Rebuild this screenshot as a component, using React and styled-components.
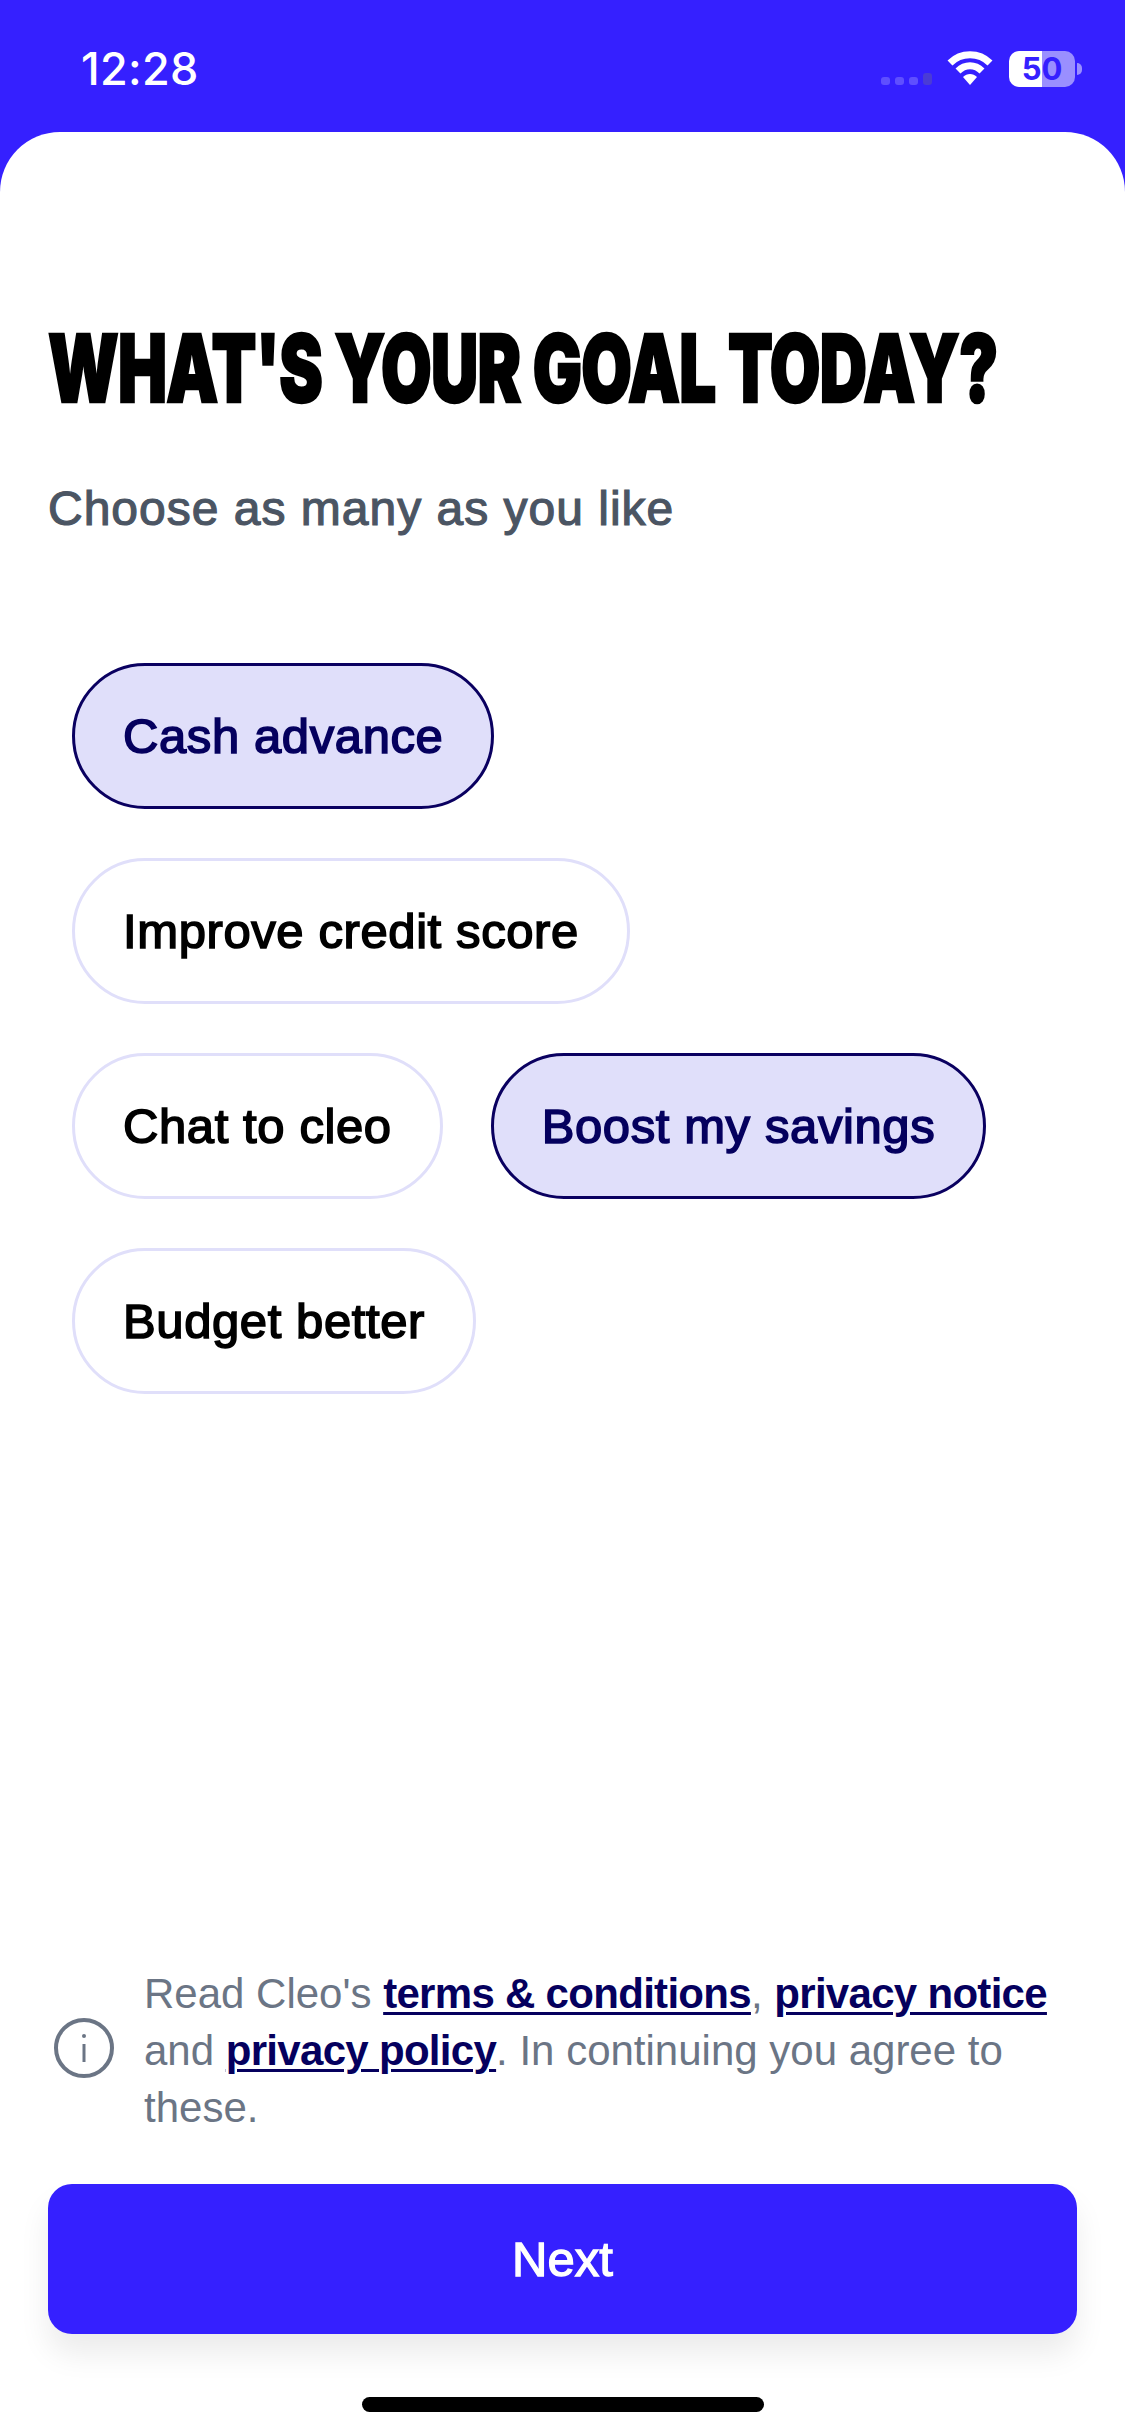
import React from 'react';
import styled, { createGlobalStyle } from 'styled-components';

const GlobalStyle = createGlobalStyle`
  html, body {
    margin: 0;
    padding: 0;
    background: #ffffff;
  }
  * {
    box-sizing: border-box;
  }
`;

const Screen = styled.div`
  width: 1125px;
  height: 2436px;
  display: flex;
  flex-direction: column;
  background: #3520ff;
  font-family: 'Liberation Sans', Arial, sans-serif;
  overflow: hidden;
`;

const StatusBar = styled.div`
  height: 132px;
  flex: none;
  display: flex;
  justify-content: space-between;
  align-items: flex-start;
  padding: 43px 43px 0 81px;
  color: #ffffff;
`;

const Time = styled.div`
  font-family: 'Inter', sans-serif;
  font-size: 45px;
  font-weight: 500;
  line-height: 52px;
  letter-spacing: 0.3px;
`;

const StatusIcons = styled.div`
  display: flex;
  align-items: flex-start;
  padding-top: 8px;
`;

const Cells = styled.div`
  display: flex;
  align-items: flex-end;
  gap: 5px;
  height: 34px;
  margin-right: 15px;
`;

const Cell = styled.span`
  width: 9px;
  height: ${(p) => (p.$dim ? 12 : 8)}px;
  border-radius: 3px;
  background: ${(p) => (p.$dim ? '#4a3bd6' : '#5f4fff')};
`;

const Battery = styled.div`
  width: 66px;
  height: 36px;
  margin-left: 16px;
  border-radius: 10px;
  background: linear-gradient(90deg, #ffffff 50%, #9a8fff 50%);
  color: #3520ff;
  font-family: 'Inter', sans-serif;
  font-size: 31px;
  font-weight: 700;
  line-height: 36px;
  text-align: center;
`;

const BatteryNub = styled.span`
  width: 5px;
  height: 12px;
  margin: 12px 0 0 2px;
  border-radius: 0 6px 6px 0;
  background: #9a8fff;
`;

const Card = styled.main`
  flex: 1;
  display: flex;
  flex-direction: column;
  background: #ffffff;
  border-radius: 60px 60px 0 0;
  padding: 188px 48px 0;
`;

const Title = styled.h1`
  width: max-content;
  margin: 0;
  font-family: 'Inter', sans-serif;
  font-size: 94px;
  font-weight: 900;
  line-height: 96px;
  color: #000000;
  white-space: nowrap;
  letter-spacing: -1px;
  -webkit-text-stroke: 2.5px #000000;
  transform: scaleX(0.695);
  transform-origin: left center;
`;

const Subtitle = styled.p`
  margin: 65px 0 0;
  font-size: 48px;
  font-weight: 400;
  line-height: 56px;
  letter-spacing: 1px;
  color: #4b5563;
  -webkit-text-stroke: 1.2px #4b5563;
`;

const Goals = styled.div`
  display: flex;
  flex-direction: column;
  gap: 49px;
  margin: 126px 0 0 24px;
`;

const GoalRow = styled.div`
  display: flex;
  gap: 48px;
`;

const Goal = styled.button`
  height: 146px;
  padding: 0 48px;
  border-radius: 73px;
  border: 3px solid ${(p) => (p.$selected ? '#0a0060' : '#e0dffa')};
  background: ${(p) => (p.$selected ? '#e0dffa' : '#ffffff')};
  color: ${(p) => (p.$selected ? '#05005e' : '#000000')};
  font-family: 'Liberation Sans', Arial, sans-serif;
  font-size: 49px;
  letter-spacing: 0.6px;
  -webkit-text-stroke: 1.6px currentColor;
`;

const Footer = styled.div`
  margin-top: auto;
  display: flex;
  flex-direction: column;
`;

const Notice = styled.div`
  display: flex;
  align-items: center;
  gap: 30px;
  padding-left: 6px;
`;

const NoticeText = styled.p`
  margin: 0;
  font-size: 42px;
  line-height: 57px;
  color: #6b7585;
`;

const NoticeLink = styled.a`
  color: #05005e;
  font-weight: 700;
  letter-spacing: -0.7px;
  text-decoration: underline;
  text-decoration-thickness: 3px;
  text-underline-offset: 4px;
`;

const InfoSvg = styled.svg`
  flex: none;
  margin-top: -6px;
`;

const NextButton = styled.button`
  height: 150px;
  margin-top: 48px;
  border: none;
  border-radius: 24px;
  background: #3520ff;
  color: #ffffff;
  font-family: 'Liberation Sans', Arial, sans-serif;
  font-size: 49px;
  -webkit-text-stroke: 1.3px #ffffff;
  box-shadow: 0 20px 30px rgba(0, 0, 0, 0.08);
`;

const HomeBar = styled.div`
  width: 402px;
  height: 15px;
  margin: 63px auto 24px;
  border-radius: 8px;
  background: #000000;
`;

const WifiIcon = () => (
  <svg width="46" height="34" viewBox="0 0 46 34" fill="none">
    <path d="M3 12 C14 1 32 1 43 12" stroke="#fff" strokeWidth="7" />
    <path d="M11 20 C18 13 28 13 35 20" stroke="#fff" strokeWidth="7" />
    <path d="M16 26 C20 22 26 22 30 26 L23 34 Z" fill="#fff" />
  </svg>
);

const InfoIcon = () => (
  <InfoSvg width="60" height="60" viewBox="0 0 60 60" fill="none">
    <circle cx="30" cy="30" r="28" stroke="#6b7585" strokeWidth="4" />
    <circle cx="30" cy="18" r="2" fill="#6b7585" />
    <path d="M30 26 V44" stroke="#6b7585" strokeWidth="3" />
  </InfoSvg>
);

const App = () => {
  return (
    <Screen>
      <GlobalStyle />
      <StatusBar>
        <Time>12:28</Time>
        <StatusIcons>
          <Cells>
            <Cell />
            <Cell />
            <Cell />
            <Cell $dim />
          </Cells>
          <WifiIcon />
          <Battery>50</Battery>
          <BatteryNub />
        </StatusIcons>
      </StatusBar>
      <Card>
        <Title>WHAT'S YOUR GOAL TODAY?</Title>
        <Subtitle>Choose as many as you like</Subtitle>
        <Goals>
          <GoalRow>
            <Goal $selected>Cash advance</Goal>
          </GoalRow>
          <GoalRow>
            <Goal>Improve credit score</Goal>
          </GoalRow>
          <GoalRow>
            <Goal>Chat to cleo</Goal>
            <Goal $selected>Boost my savings</Goal>
          </GoalRow>
          <GoalRow>
            <Goal>Budget better</Goal>
          </GoalRow>
        </Goals>
        <Footer>
          <Notice>
            <InfoIcon />
            <NoticeText>
              Read Cleo's <NoticeLink>terms &amp; conditions</NoticeLink>, <NoticeLink>privacy notice</NoticeLink> and{' '}
              <NoticeLink>privacy policy</NoticeLink>. In continuing you agree to these.
            </NoticeText>
          </Notice>
          <NextButton>Next</NextButton>
          <HomeBar />
        </Footer>
      </Card>
    </Screen>
  );
};

export default App;
